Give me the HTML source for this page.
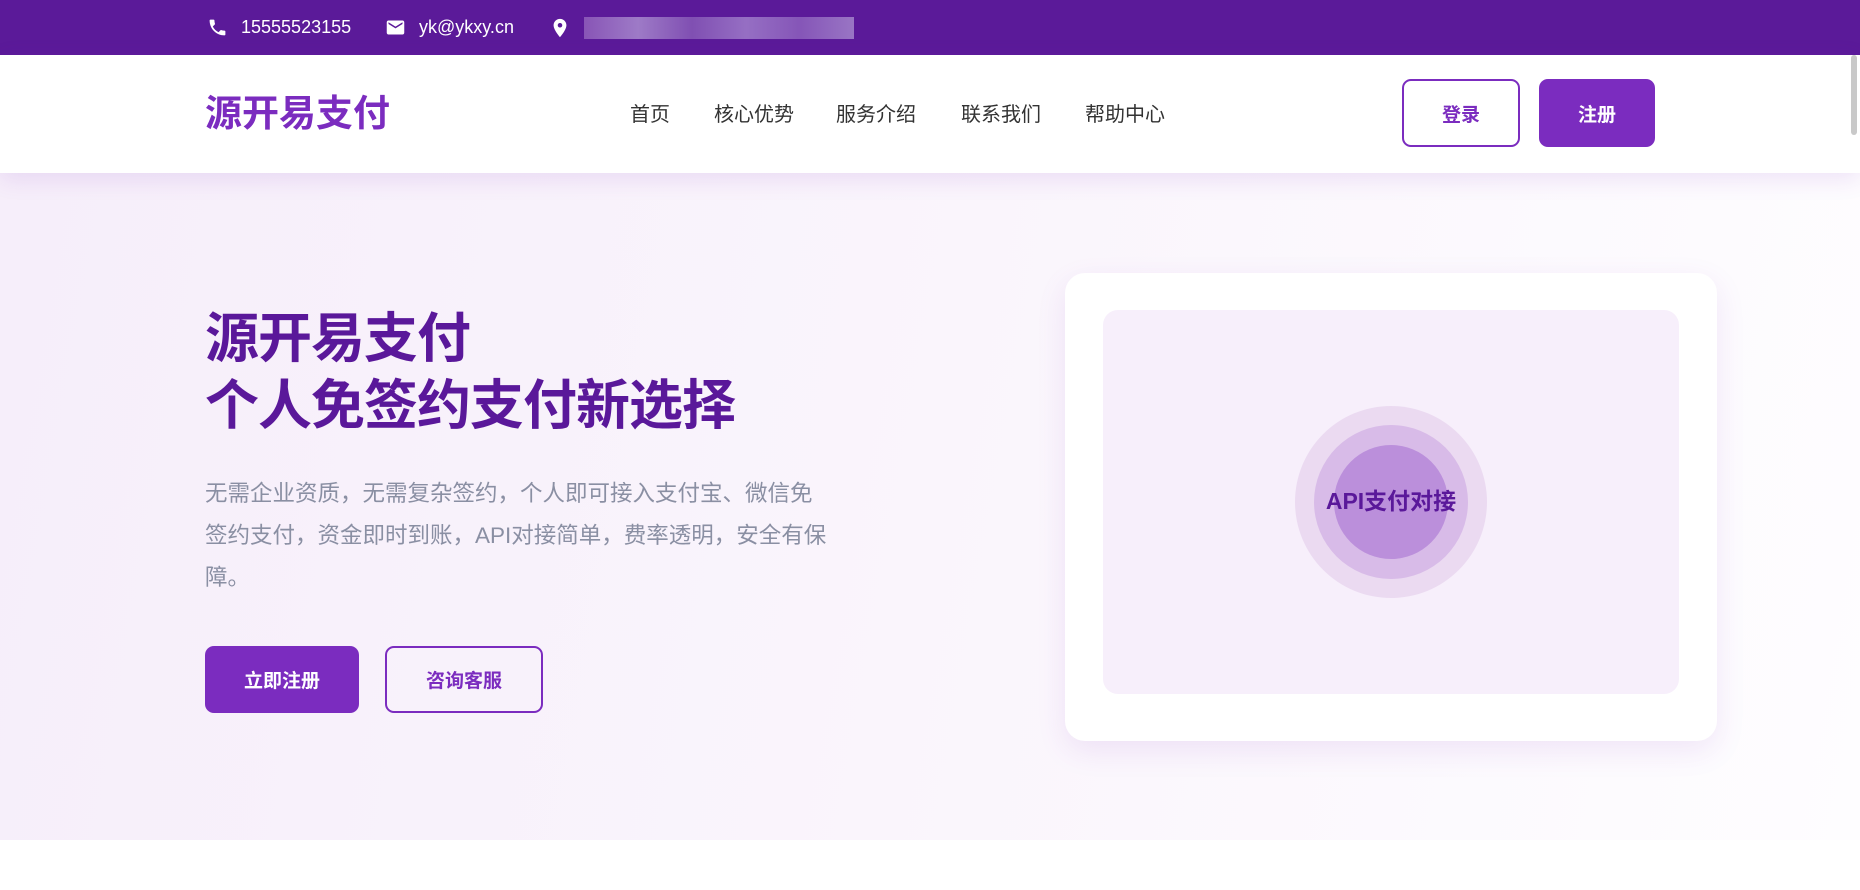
<!DOCTYPE html>
<html><head><meta charset="utf-8"><style>
*{margin:0;padding:0;box-sizing:border-box}
body{width:1860px;height:890px;overflow:hidden;background:#fff;font-family:"Liberation Sans","Noto Sans CJK SC",sans-serif;position:relative}
.top{position:absolute;left:0;top:0;width:1860px;height:55px;background:#5b1a99;color:#fff;font-size:18px}
.top span{position:absolute;top:16px;line-height:22px}
.top svg{position:absolute}
.blur{position:absolute;left:584px;top:17px;width:270px;height:22px;background:linear-gradient(90deg,#8d5bb9,#a585cc 20%,#8455b5 40%,#9c78c8 60%,#8a5cbb 80%,#a07fc9);opacity:.9}
.nav{position:absolute;left:0;top:55px;width:1860px;height:118px;background:#fff;box-shadow:0 6px 22px rgba(123,44,191,.12);z-index:2}
.logo{position:absolute;left:205px;top:36px;font-size:37px;font-weight:bold;color:#7b2cbf;line-height:46px}
.nav a{position:absolute;top:47px;font-size:20px;color:#333;line-height:26px;text-decoration:none}
.btn{position:absolute;border-radius:9px;font-weight:bold;font-size:19px;display:flex;align-items:center;justify-content:center}
.hero{position:absolute;left:0;top:173px;width:1860px;height:667px;background:linear-gradient(100deg,#f6eefa 0%,#faf5fc 50%,#fefdff 100%)}
h1{position:absolute;left:205px;top:306px;font-size:54px;line-height:67px;color:#5a189a;font-weight:bold;letter-spacing:-1px}
p{position:absolute;left:205px;top:473px;font-size:22.5px;line-height:42px;color:#8a8fa3;white-space:nowrap}
.card{position:absolute;left:1065px;top:273px;width:652px;height:468px;background:#fff;border-radius:20px;box-shadow:0 10px 30px rgba(123,44,191,.1)}
.inner{position:absolute;left:38px;top:37px;width:576px;height:384px;background:#f7effb;border-radius:15px}
.c{position:absolute;border-radius:50%}
</style></head><body>
<div class="top">
<svg style="left:207px;top:17px" width="21" height="21" viewBox="0 0 24 24"><path fill="#fff" d="M6.6 10.8c1.4 2.8 3.8 5.1 6.6 6.6l2.2-2.2c.3-.3.7-.4 1-.2 1.1.4 2.3.6 3.6.6.6 0 1 .4 1 1V20c0 .6-.4 1-1 1C10.6 21 3 13.4 3 4c0-.6.4-1 1-1h3.5c.6 0 1 .4 1 1 0 1.3.2 2.5.6 3.600.1.3 0 .7-.2 1z"/></svg>
<span style="left:241px">15555523155</span>
<svg style="left:384px;top:17px" width="23" height="21" viewBox="0 0 24 24"><path fill="#fff" d="M20 4H4c-1.1 0-2 .9-2 2v12c0 1.1.9 2 2 2h16c1.1 0 2-.9 2-2V6c0-1.1-.9-2-2-2zm0 4l-8 5-8-5V6l8 5 8-5v2z"/></svg>
<span style="left:419px">yk@ykxy.cn</span>
<svg style="left:549px;top:16px" width="22" height="24" viewBox="0 0 24 24"><path fill="#fff" d="M12 2C8.1 2 5 5.1 5 9c0 5.2 7 13 7 13s7-7.8 7-13c0-3.900-3.1-7-7-7zm0 9.5c-1.4 0-2.5-1.1-2.5-2.5s1.1-2.5 2.5-2.5 2.5 1.1 2.5 2.5-1.1 2.5-2.5 2.5z"/></svg>
<div class="blur"></div>
</div>
<div class="nav">
<div class="logo">源开易支付</div>
<a style="left:630px">首页</a><a style="left:714px">核心优势</a><a style="left:836px">服务介绍</a><a style="left:961px">联系我们</a><a style="left:1085px">帮助中心</a>
<div class="btn" style="left:1402px;top:24px;width:118px;height:68px;border:2px solid #7b2cbf;color:#7b2cbf">登录</div>
<div class="btn" style="left:1539px;top:24px;width:116px;height:68px;background:#7b2cbf;color:#fff">注册</div>
</div>
<div style="position:absolute;left:1851px;top:55px;width:6px;height:80px;background:#c9c9c9;border-radius:3px;z-index:3"></div>
<div class="hero"></div>
<h1>源开易支付<br>个人免签约支付新选择</h1>
<p>无需企业资质，无需复杂签约，个人即可接入支付宝、微信免<br>签约支付，资金即时到账，API对接简单，费率透明，安全有保<br>障。</p>
<div class="btn" style="left:205px;top:646px;width:154px;height:67px;background:#7b2cbf;color:#fff">立即注册</div>
<div class="btn" style="left:385px;top:646px;width:158px;height:67px;border:2px solid #7b2cbf;color:#7b2cbf">咨询客服</div>
<div class="card"><div class="inner">
<div class="c" style="left:192px;top:96px;width:192px;height:192px;background:#ebdaf1"></div>
<div class="c" style="left:211px;top:115px;width:154px;height:154px;background:#d8bbe8"></div>
<div class="c" style="left:231px;top:135px;width:114px;height:114px;background:#bb8fdb"></div>
<div style="position:absolute;left:0;width:576px;top:176px;text-align:center;font-size:23px;font-weight:bold;color:#5a189a;line-height:30px">API支付对接</div>
</div></div>
</body></html>
